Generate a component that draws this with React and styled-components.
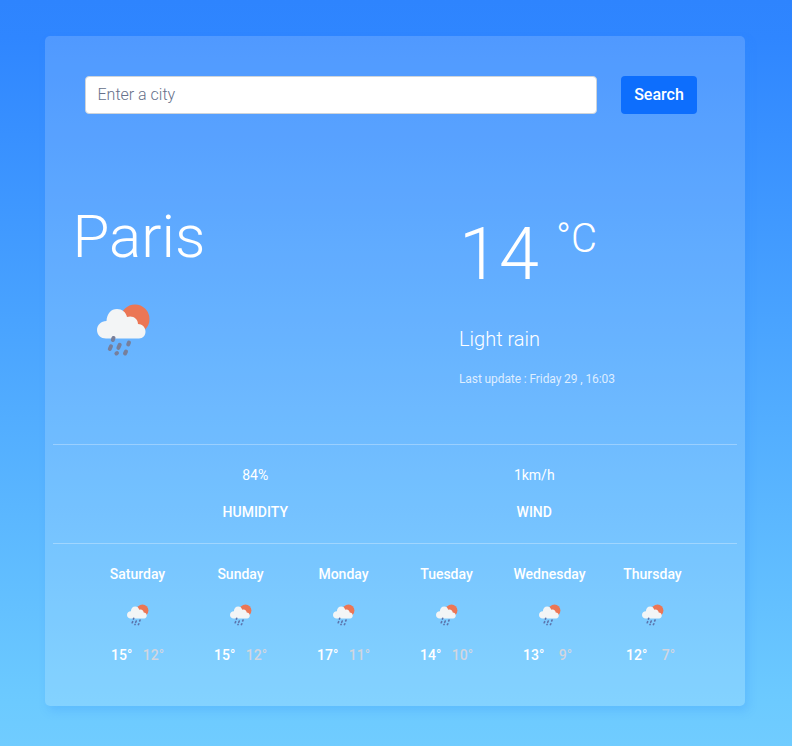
import React from "react";
import styled, { createGlobalStyle } from "styled-components";

const GlobalStyle = createGlobalStyle`
  * { box-sizing: border-box; }
  body {
    margin: 0;
    font-family: Roboto, sans-serif;
    color: #fff;
  }
`;

const Page = styled.main`
  height: 746px;
  padding: 36px 47px 0 45px;
  background: linear-gradient(180deg, #2e84fe 0%, #2f86ff 5%, #6ccaff 94%, #70ccff 100%);
`;

const Card = styled.section`
  display: flex;
  flex-direction: column;
  height: 670px;
  padding: 40px 8px 0;
  border-radius: 5px;
  background: rgba(255, 255, 255, 0.16);
  box-shadow: 3px 5px 10px rgba(45, 135, 250, 0.22);
`;

const SearchForm = styled.form`
  display: flex;
  gap: 24px;
  padding-left: 32px;
`;

const SearchInput = styled.input`
  width: 512px;
  height: 38px;
  padding: 5px 12px 7px 11.5px;
  border: 1px solid #ced4da;
  border-radius: 4px;
  background: #fff;
  font: 300 16px/24px Roboto, sans-serif;
  &::placeholder { color: #66708a; opacity: 1; }
`;

const SearchButton = styled.button`
  width: 76px;
  height: 38px;
  padding: 0;
  border: 0;
  border-radius: 4px;
  background: #0d6efd;
  color: #fff;
  font: 500 16px/24px Roboto, sans-serif;
`;

const Current = styled.div`
  display: grid;
  grid-template-columns: 386px 1fr;
  height: 330px;
  padding: 87px 0 0 20px;
`;

const City = styled.h1`
  margin: 0 0 30px -0.5px;
  font-size: 60px;
  font-weight: 300;
  line-height: 72px;
`;

const LargeIconBox = styled.div`
  margin-left: 24px;
  line-height: 0;
`;

const Temperature = styled.div`
  display: flex;
  align-items: flex-start;
  height: 125px;
  padding-top: 12px;
  font-size: 72px;
  font-weight: 300;
  line-height: 84px;
`;

const Unit = styled.span`
  margin: -11px 0 0 17px;
  font-size: 40px;
  line-height: 74px;
`;

const Description = styled.p`
  margin: 0;
  font-size: 20px;
  font-weight: 300;
  line-height: 26px;
`;

const Updated = styled.p`
  margin: 19px 0 0;
  font-size: 12px;
  line-height: 16px;
  letter-spacing: -0.1px;
  color: rgba(255, 255, 255, 0.78);
`;

const Measures = styled.div`
  display: grid;
  grid-template-columns: 279px 279px;
  justify-content: center;
  height: 100px;
  padding: 20px 0.5px 0 0;
  border: solid rgba(255, 255, 255, 0.3);
  border-width: 1px 0;
`;

const Measure = styled.div`
  font-size: 14px;
  line-height: 21px;
  text-align: center;
`;

const MeasureLabel = styled.div`
  margin-top: 16px;
  font-weight: 500;
`;

const Forecast = styled.div`
  display: grid;
  grid-template-columns: repeat(6, 103px);
  padding: 20px 0 0 33px;
`;

const Day = styled.div`
  display: flex;
  flex-direction: column;
  align-items: center;
  font-size: 14px;
  font-weight: 500;
  line-height: 21px;
`;

const SmallIconBox = styled.div`
  height: 22px;
  margin: 19px 0 19px;
  line-height: 0;
`;

const Range = styled.div`
  display: flex;
  gap: 10.5px;
`;

const Low = styled.span`
  min-width: 21px;
  text-align: center;
  color: #d2d6df;
`;

function RainIcon({ size, rain = "#777f9b" }) {
  return (
    <svg width={size} height={size} viewBox="0 0 54 54" aria-hidden="true">
      <circle cx="38" cy="16" r="14.5" fill="#eb7655" />
      <path
        fill="#f3f5f6"
        d="M9 35.5C4 35.5 0 32 0 27C0 22 4 18 9.5 18C10 10.5 14 6 20 6C25 6 29 9 30 14C36 12 41 16 41 21C45 21 48.5 24 48.5 28.5C48.5 32.5 46 35.5 42 35.5Z"
      />
      <g stroke={rain} strokeWidth="4" strokeLinecap="round">
        <path d="M16.5 35L15.8 37M14 43.3L12.8 46M22.7 41.8L21.4 44.8M32 39.5L31.2 41.5M20 50L19.4 50.5M29 48.5L28 50.5" />
      </g>
    </svg>
  );
}

const days = [
  ["Saturday", 15, 12],
  ["Sunday", 15, 12],
  ["Monday", 17, 11],
  ["Tuesday", 14, 10],
  ["Wednesday", 13, 9],
  ["Thursday", 12, 7],
];

export default function App() {
  return (
    <>
      <GlobalStyle />
      <Page>
        <Card>
          <SearchForm onSubmit={(event) => event.preventDefault()}>
            <SearchInput placeholder="Enter a city" aria-label="City" />
            <SearchButton>Search</SearchButton>
          </SearchForm>
          <Current>
            <div>
              <City>Paris</City>
              <LargeIconBox><RainIcon size={54} /></LargeIconBox>
            </div>
            <div>
              <Temperature>14<Unit>°C</Unit></Temperature>
              <Description>Light rain</Description>
              <Updated>Last update : Friday 29 , 16:03</Updated>
            </div>
          </Current>
          <Measures>
            <Measure>84%<MeasureLabel>HUMIDITY</MeasureLabel></Measure>
            <Measure>1km/h<MeasureLabel>WIND</MeasureLabel></Measure>
          </Measures>
          <Forecast>
            {days.map(([name, high, low]) => (
              <Day key={name}>
                {name}
                <SmallIconBox><RainIcon size={22} rain="#5c74ac" /></SmallIconBox>
                <Range><span>{high}°</span><Low>{low}°</Low></Range>
              </Day>
            ))}
          </Forecast>
        </Card>
      </Page>
    </>
  );
}
